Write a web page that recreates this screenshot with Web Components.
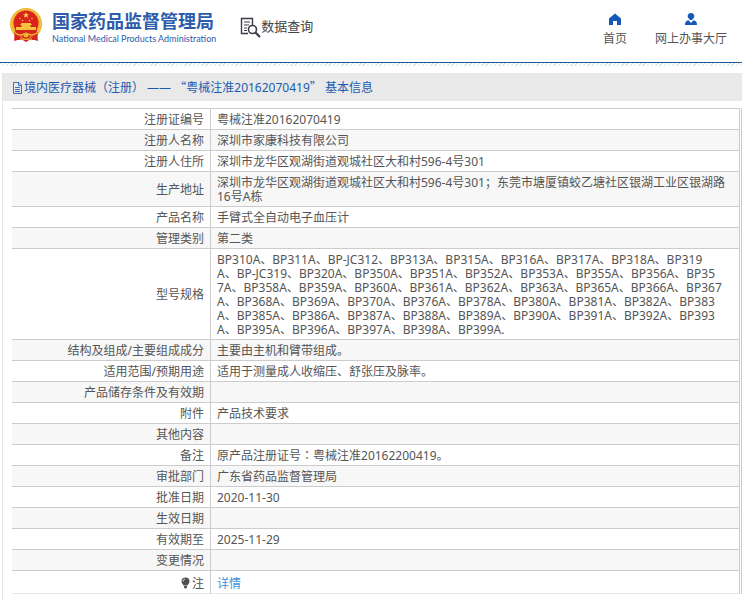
<!DOCTYPE html>
<html lang="zh-CN">
<head>
<meta charset="utf-8">
<title>国家药品监督管理局 数据查询</title>
<style>
body { margin: 0; background: #fff; color: #555; font: 12px/14px "Noto Sans", "Noto Sans CJK SC", sans-serif; }
.quote { font-family: "Noto Sans CJK SC", sans-serif; line-height: 1; }
</style>
</head>
<body>
<site-header>
  <site-brand slot="brand" subtitle="National Medical Products Administration">国家药品监督管理局</site-brand>
  <section-title slot="section">数据查询</section-title>
  <nav-link slot="nav" icon="home">首页</nav-link>
  <nav-link slot="nav" icon="user">网上办事大厅</nav-link>
</site-header>
<info-panel>
  <span slot="title">境内医疗器械（注册） —— <span class="quote">“</span>粤械注准20162070419<span class="quote">”</span> 基本信息</span>
  <record-table></record-table>
</info-panel>

<script>
const define = (name, markup, setup) => {
  const template = document.createElement('template');
  template.innerHTML = markup;
  customElements.define(name, class extends HTMLElement {
    constructor() {
      super();
      this.attachShadow({ mode: 'open' }).append(template.content.cloneNode(true));
    }
    connectedCallback() {
      if (setup) setup(this, this.shadowRoot);
    }
  });
};

define('site-header', `
<style>
  :host { display: block; }
  header { display: flex; align-items: flex-start; height: 62px; border-bottom: 1px solid #1b5a9c; }
  .section { margin-left: 24px; padding-top: 17px; }
  nav { display: flex; gap: 28px; margin-left: auto; padding: 13px 15px 0 0; }
  .hatch { height: 3px; background: repeating-linear-gradient(135deg, #d3e6ee 0 1px, #fff 1px 3px); }
</style>
<header>
  <slot name="brand"></slot>
  <div class="section"><slot name="section"></slot></div>
  <nav><slot name="nav"></slot></nav>
</header>
<div class="hatch"></div>`);

define('site-brand', `
<style>
  :host { display: flex; gap: 9px; padding: 7px 0 0 9px; color: #2c5cab; }
  svg { width: 34px; height: 36px; }
  .name { font-size: 18px; line-height: 20px; font-weight: 700; margin-top: 4px; white-space: nowrap; }
  .sub { font: 9px/12px Lato, sans-serif; margin-top: 2px; white-space: nowrap; }
</style>
<svg viewBox="0 0 34 36" aria-hidden="true">
  <path d="M6 26h22l1 8-7-2-5 3-5-3-7 2z" fill="#d5251c"/>
  <circle cx="17" cy="17" r="16" fill="#eeb52f"/>
  <circle cx="17" cy="17" r="14.3" fill="none" stroke="#f7d35c" stroke-width="1" stroke-dasharray="2 1"/>
  <circle cx="17" cy="16" r="12.5" fill="#d9231b"/>
  <path d="M17 5.2l.9 2h2.2l-1.8 1.4.7 2.2-2-1.3-2 1.3.7-2.2L13.9 7.2h2.2z" fill="#f8d44c"/>
  <g fill="#f5c33d">
    <circle cx="11" cy="11.5" r=".8"/><circle cx="23" cy="11.5" r=".8"/>
    <circle cx="13.500" cy="13.5" r=".8"/><circle cx="20.5" cy="13.5" r=".8"/>
    <path d="M11 18l1.500-2h9l1.500 2zM12.500 18h9v2h-9zM7 20h20v3H7z"/>
  </g>
  <path d="M6 23h22l-1 6H7z" fill="#d5251c"/>
  <path d="M5 25c4 5 7 5 9 4l3-2 3 2c2 1 5 1 9-4l-1 7c-4 2-7 1-8-1l-3 1-3-1c-1 2-4 3-8 1z" fill="#d5251c"/>
  <path d="M6 26c4 3 7 2 9 1m13-1c-4 3-7 2-9 1" fill="none" stroke="#f0b934" stroke-width="1.5"/>
  <circle cx="17" cy="28" r="2.5" fill="#edb332"/>
  <path d="M11 33l2-3m10 3l-2-3" stroke="#edb332"/>
</svg>
<div>
  <div class="name"><slot></slot></div>
  <div class="sub"></div>
</div>`, (host, root) => {
  root.querySelector('.sub').textContent = host.getAttribute('subtitle');
});

define('section-title', `
<style>
  :host { display: flex; color: #444; font-size: 13px; line-height: 18px; white-space: nowrap; }
  svg { width: 21px; height: 21px; }
</style>
<svg viewBox="0 0 21 21" fill="none" stroke="#3c3c48" aria-hidden="true">
  <path d="M8 16.500H1.500v-15h11V8" stroke-width="1.400"/>
  <path d="M4 5h6M4 8h5M4 11h3M4 13.500h3"/>
  <circle cx="12.500" cy="12.500" r="4" stroke-width="1.600"/>
  <path d="M15.500 15.500L20 20" stroke-width="2.200"/>
</svg>
<slot></slot>`);

define('nav-link', `
<style>
  :host { display: block; }
  a { display: flex; flex-direction: column; align-items: center; gap: 6px; color: #555; text-decoration: none; white-space: nowrap; }
  svg { width: 14px; height: 13px; fill: #1359b5; }
</style>
<a href="#"><svg viewBox="0 0 14 13" aria-hidden="true"><path/></svg><span><slot></slot></span></a>`, (host, root) => {
  const shapes = {
    home: 'M7 .5L13 5.500V12H9V8H5v4H1V5.500z',
    user: 'M7 0a3.200 3.200 0 0 1 2 5.800L8 7H6L5 5.800A3.200 3.200 0 0 1 7 0zM4.500 7.200L7 10l2.500-2.800C12 7.500 13 9 13 12H1c0-3 1-4.500 3.500-4.800z'
  };
  root.querySelector('path').setAttribute('d', shapes[host.getAttribute('icon')]);
});

define('info-panel', `
<style>
  :host { display: block; margin: 7px 0 0 2px; border-left: 1px solid #e4e4e4; padding-bottom: 7px; }
  h1 { display: flex; align-items: center; gap: 1px; margin: 0; padding: 7px 9px 6px; background: #e9e9e9; color: #1b5cb0; font-size: 12px; line-height: 15px; font-weight: 400; }
  svg { width: 11px; height: 12px; }
  .body { margin: 7px 0 0 9px; padding-right: 1px; border-right: 1px solid #ccc; }
</style>
<h1>
  <svg viewBox="0 0 11 12" fill="none" stroke="#3a70bb" aria-hidden="true"><path d="M1.500.5H7L9.500 3v8.500h-8zM6.500.5V3.500h3M3 5.500h5M3 7.500h5M3 9.500h5"/></svg>
  <slot name="title"></slot>
</h1>
<div class="body"><slot></slot></div>`);

const models = [
  'BP310A、BP311A、BP-JC312、BP313A、BP315A、BP316A、BP317A、BP318A、BP319',
  'A、BP-JC319、BP320A、BP350A、BP351A、BP352A、BP353A、BP355A、BP356A、BP35',
  '7A、BP358A、BP359A、BP360A、BP361A、BP362A、BP363A、BP365A、BP366A、BP367',
  'A、BP368A、BP369A、BP370A、BP376A、BP378A、BP380A、BP381A、BP382A、BP383',
  'A、BP385A、BP386A、BP387A、BP388A、BP389A、BP390A、BP391A、BP392A、BP393',
  'A、BP395A、BP396A、BP397A、BP398A、BP399A.'
];

const bulb = '<svg viewBox="0 0 9 12" aria-hidden="true"><path d="M4.500.5a4 4 0 0 1 4 4C8.500 6.500 7 7 6.500 8.500h-4C2 7 .5 6.500.5 4.500a4 4 0 0 1 4-4zM3 9h3v1.500L5 11.500H4L3 10.500z" fill="#505050"/><path d="M2 4.500A2.500 2.500 0 0 1 4 2" fill="none" stroke="#ddd"/></svg>';

const rows = [
  ['注册证编号', '粤械注准20162070419'],
  ['注册人名称', '深圳市家康科技有限公司'],
  ['注册人住所', '深圳市龙华区观湖街道观城社区大和村596-4号301'],
  ['生产地址', '深圳市龙华区观湖街道观城社区大和村596-4号301；东莞市塘厦镇蛟乙塘社区银湖工业区银湖路16号A栋'],
  ['产品名称', '手臂式全自动电子血压计'],
  ['管理类别', '第二类'],
  ['型号规格', models.join('\n')],
  ['结构及组成/主要组成成分', '主要由主机和臂带组成。'],
  ['适用范围/预期用途', '适用于测量成人收缩压、舒张压及脉率。'],
  ['产品储存条件及有效期', ''],
  ['附件', '产品技术要求'],
  ['其他内容', ''],
  ['备注', '原产品注册证号<span class="mid" lang="zh-TW">：</span>粤械注准20162200419。'],
  ['审批部门', '广东省药品监督管理局'],
  ['批准日期', '2020-11-30'],
  ['生效日期', ''],
  ['有效期至', '2025-11-29'],
  ['变更情况', ''],
  [bulb + '注', '<a href="#">详情</a>']
];

define('record-table', `
<style>
  :host { display: block; }
  table { width: 100%; border-collapse: separate; border-spacing: 0; table-layout: fixed; border-top: 1px solid #ccc; border-right: 1px solid #ccc; }
  col.label { width: 199px; }
  th, td { height: 14px; padding: 4px 6px 2px; border-bottom: 1px solid #ccc; vertical-align: middle; font-weight: 400; }
  th { text-align: right; border-right: 1px solid #ccc; }
  td { text-align: left; white-space: pre-line; }
  tr:nth-child(even) { background: #f7f7f7; }
  tr:last-child > * { padding-top: 6px; border-bottom-color: #e8e8e8; }
  .mid { font-family: "Noto Sans CJK TC", sans-serif; line-height: 1; }
  svg { width: 9px; height: 12px; margin-right: 2px; vertical-align: -1px; }
  a { color: #3d8fdc; text-decoration: none; }
</style>
<table>
  <colgroup><col class="label"><col></colgroup>
  <tbody></tbody>
</table>`, (host, root) => {
  root.querySelector('tbody').innerHTML = rows
    .map(([label, value]) => `<tr><th scope="row">${label}</th><td>${value}</td></tr>`)
    .join('');
});
</script>
</body>
</html>
